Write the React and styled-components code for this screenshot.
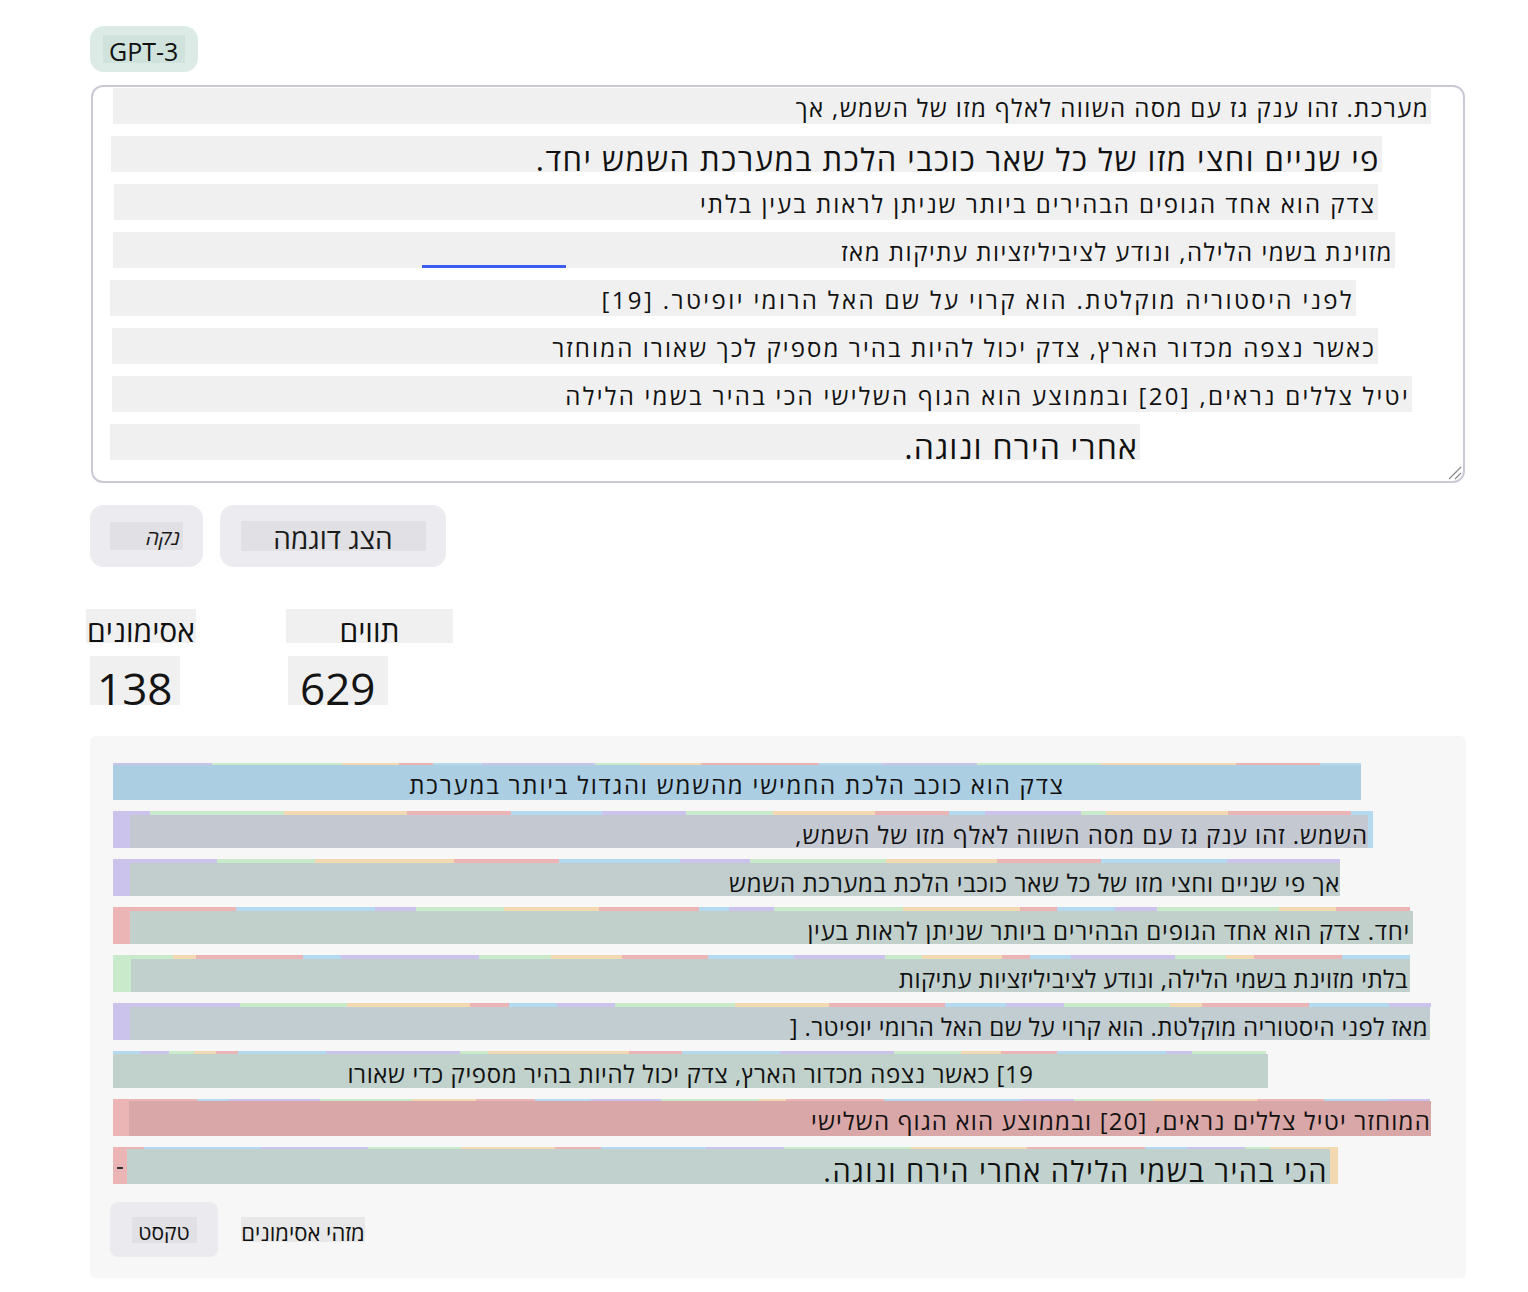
import styled, { createGlobalStyle } from "styled-components"

const GlobalStyle = createGlobalStyle`
  body {
    margin: 0;
    background: #ffffff;
    font-family: "Open Sans", "Noto Sans Hebrew", "DejaVu Sans", sans-serif;
    color: #111111;
  }
`;

const Page = styled.div`
  width: 1376px;
  padding: 26px 0 40px 90px;
`;

const ModelPill = styled.div`
  display: flex;
  align-items: center;
  width: 108px;
  height: 46px;
  box-sizing: border-box;
  padding-left: 13px;
  background: #dcebe5;
  border-radius: 14px;
`;

const PillLabel = styled.span`
  display: block;
  height: 28px;
  padding: 0 7px 0 6px;
  background: #cfe3dc;
  font-size: 25px;
  line-height: 33px;
`;

const Editor = styled.div`
  position: relative;
  margin: 13px 0 0 1px;
  width: 1374px;
  height: 398px;
  box-sizing: border-box;
  padding: 1px 0 0 20px;
  border: 2px solid #cacad6;
  border-radius: 12px;
  display: flex;
  flex-direction: column;
  gap: 12px;
`;

const EditorLine = styled.div`
  position: relative;
  width: ${p => p.$w}px;
  height: 36px;
  margin-left: ${p => p.$dx || 0}px;
  background: #f0f0f0;
  direction: rtl;
  text-align: right;
  font-size: ${p => p.$fs || 24}px;
  line-height: ${p => p.$lh || 40}px;
  letter-spacing: ${p => p.$ls || 0}px;
  white-space: nowrap;
  overflow: hidden;
  padding-right: 2px;
  box-sizing: border-box;
`;

const Caret = styled.div`
  position: absolute;
  left: 309px;
  bottom: 0;
  width: 144px;
  height: 3px;
  background: #3f5cf0;
`;

const ResizeGrip = styled.svg`
  position: absolute;
  right: 1px;
  bottom: 1px;
`;

const ButtonRow = styled.div`
  display: flex;
  gap: 17px;
  margin-top: 22px;
`;

const Button = styled.div`
  display: flex;
  align-items: center;
  justify-content: center;
  width: ${p => p.$w}px;
  height: 62px;
  background: #ebebf0;
  border-radius: 14px;
`;

const ButtonLabel = styled.span`
  display: block;
  width: ${p => p.$w}px;
  height: ${p => p.$h}px;
  background: #e0e0e5;
  direction: rtl;
  text-align: ${p => p.$align || "center"};
  font-size: ${p => p.$fs}px;
  line-height: ${p => p.$lh}px;
  font-style: ${p => (p.$italic ? "italic" : "normal")};
  padding-right: ${p => p.$pr || 0}px;
  box-sizing: border-box;
  overflow: hidden;
  white-space: nowrap;
  color: #1a1a1a;
`;

const Stats = styled.div`
  display: flex;
  margin-top: 42px;
  margin-left: -4px;
  gap: 90px;
`;

const Stat = styled.div`
  display: flex;
  flex-direction: column;
  gap: 13px;
`;

const StatLabel = styled.div`
  width: ${p => p.$w}px;
  height: 34px;
  background: #f0f0f0;
  direction: rtl;
  text-align: center;
  font-size: 30px;
  line-height: 44px;
  overflow: hidden;
  white-space: nowrap;
`;

const StatValue = styled.div`
  width: ${p => p.$w}px;
  height: 49px;
  margin-left: ${p => p.$dx || 0}px;
  background: #f0f0f0;
  font-size: 44px;
  line-height: 64px;
  padding-left: ${p => p.$pl}px;
  box-sizing: border-box;
  overflow: hidden;
  color: #141414;
`;

const Panel = styled.div`
  margin-top: 31px;
  background: #f7f7f7;
  border-radius: 6px;
  padding: 27px 0 21px 23px;
`;

const TokenRows = styled.div`
  display: flex;
  flex-direction: column;
  gap: 11px;
`;

const TokenRow = styled.div`
  display: grid;
  width: ${p => p.$w}px;
  height: 37px;
`;

const Stripes = styled.div`
  grid-area: 1 / 1;
  display: flex;
  height: 37px;
`;

const Seg = styled.div`
  height: ${p => (p.$full ? 37 : 4)}px;
  background: ${p => p.$c};
  flex-shrink: 0;
`;

const Overlay = styled.div`
  grid-area: 1 / 1;
  align-self: end;
  width: ${p => p.$w}px;
  height: ${p => p.$h || 33}px;
  margin-left: ${p => p.$dx}px;
  background: ${p => p.$bg};
  direction: rtl;
  text-align: ${p => p.$align};
  font-size: ${p => p.$fs || 24}px;
  line-height: ${p => p.$lh || 40}px;
  letter-spacing: ${p => p.$ls || 0}px;
  white-space: nowrap;
  overflow: hidden;
  padding-right: ${p => p.$pr || 0}px;
  box-sizing: border-box;
`;

const Dash = styled.span`
  grid-area: 1 / 1;
  align-self: center;
  justify-self: start;
  margin: 4px 0 0 4px;
  width: 6px;
  height: 2px;
  background: #333;
`;

const Footer = styled.div`
  display: flex;
  align-items: center;
  gap: 23px;
  margin: 18px 0 0 -3px;
`;

const Toggle = styled.div`
  display: flex;
  align-items: center;
  justify-content: center;
  width: 108px;
  height: 55px;
  background: #ebebef;
  border-radius: 8px;
`;

const ToggleLabel = styled.span`
  display: block;
  width: 65px;
  height: 26px;
  background: #e0e0e5;
  font-size: 21px;
  line-height: 30px;
  text-align: center;
  direction: rtl;
  overflow: hidden;
`;

const FooterLabel = styled.span`
  display: block;
  width: 124px;
  height: 25px;
  background: #e8e8e8;
  font-size: 22px;
  line-height: 30px;
  direction: rtl;
  text-align: center;
  overflow: hidden;
  white-space: nowrap;
`;

const editorLines = [
  { w: 1318, ls: 1.4, text: "מערכת. זהו ענק גז עם מסה השווה לאלף מזו של השמש, אך" },
  { w: 1271, dx: -2, fs: 31, lh: 46, ls: 1.5, text: "פי שניים וחצי מזו של כל שאר כוכבי הלכת במערכת השמש יחד." },
  { w: 1264, dx: 1, ls: 2, text: "צדק הוא אחד הגופים הבהירים ביותר שניתן לראות בעין בלתי" },
  { w: 1282, ls: 1.5, caret: true, text: "מזוינת בשמי הלילה, ונודע לציביליזציות עתיקות מאז" },
  { w: 1246, dx: -3, ls: 2.4, text: "לפני היסטוריה מוקלטת. הוא קרוי על שם האל הרומי יופיטר. [19]" },
  { w: 1266, dx: -1, ls: 2.1, text: "כאשר נצפה מכדור הארץ, צדק יכול להיות בהיר מספיק לכך שאורו המוחזר" },
  { w: 1300, dx: -1, ls: 2.3, text: "יטיל צללים נראים, [20] ובממוצע הוא הגוף השלישי הכי בהיר בשמי הלילה" },
  { w: 1030, dx: -3, fs: 32, lh: 46, ls: 1.2, text: "אחרי הירח ונוגה." },
];

const tokenColors = ["#cbc3eb", "#c9ebcb", "#f2d9b1", "#ecb5b5", "#b5daef"];

// rows of the token view: stripe width, first colour, overlay box and text
const tokenRows = [
  { w: 1248, start: 0, seed: 11, dx: 0, ow: 1248, bg: "#abcee2", align: "center", h: 35, ls: 1.8,
    text: "צדק הוא כוכב הלכת החמישי מהשמש והגדול ביותר במערכת" },
  { w: 1260, start: 0, seed: 23, dx: 17, ow: 1238, bg: "#c4c8d1", align: "right", ls: 1, tail: true,
    text: "השמש. זהו ענק גז עם מסה השווה לאלף מזו של השמש," },
  { w: 1227, start: 0, seed: 37, dx: 17, ow: 1210, bg: "#c1cecd", align: "right", ls: 0.65,
    text: "אך פי שניים וחצי מזו של כל שאר כוכבי הלכת במערכת השמש" },
  { w: 1297, start: 3, seed: 41, dx: 17, ow: 1283, bg: "#c1d0cb", align: "right", pr: 3, ls: 0.75,
    text: "יחד. צדק הוא אחד הגופים הבהירים ביותר שניתן לראות בעין" },
  { w: 1297, start: 1, seed: 53, dx: 18, ow: 1279, bg: "#c1cfcd", align: "right", pr: 2, ls: 0.4,
    text: "בלתי מזוינת בשמי הלילה, ונודע לציביליזציות עתיקות" },
  { w: 1318, start: 0, seed: 67, dx: 17, ow: 1300, bg: "#c2cdd2", align: "right", pr: 2, ls: 0.35,
    text: "מאז לפני היסטוריה מוקלטת. הוא קרוי על שם האל הרומי יופיטר. [" },
  { w: 1153, start: 4, seed: 71, dx: 0, ow: 1155, bg: "#c1d1cb", align: "center", h: 34, ls: 0.6,
    text: "19] כאשר נצפה מכדור הארץ, צדק יכול להיות בהיר מספיק כדי שאורו" },
  { w: 1317, start: 3, seed: 83, dx: 16, ow: 1302, bg: "#d9a7a7", align: "right", h: 35, ls: 1.2,
    text: "המוחזר יטיל צללים נראים, [20] ובממוצע הוא הגוף השלישי" },
  { w: 1225, start: 3, seed: 97, dx: 14, ow: 1203, bg: "#c1d1cd", align: "right", pr: 2, fs: 29, lh: 44, h: 35, ls: 1.5, dash: true, tail: true,
    text: "הכי בהיר בשמי הלילה אחרי הירח ונוגה." },
];

function makeSegments(total, start, seed) {
  const segs = [];
  let r = seed;
  let acc = 0;
  let i = start;
  while (acc < total) {
    r = (r * 9301 + 49297) % 233280;
    const w = Math.min(total - acc, 22 + Math.floor((r / 233280) * 120));
    segs.push({ w, c: tokenColors[i % 5] });
    acc += w;
    i++;
  }
  return segs;
}

const App = () => {
  return (
    <Page>
      <GlobalStyle />
      <ModelPill>
        <PillLabel>GPT-3</PillLabel>
      </ModelPill>

      <Editor>
        {editorLines.map((l, i) => (
          <EditorLine key={i} $w={l.w} $dx={l.dx} $fs={l.fs} $lh={l.lh} $ls={l.ls}>
            {l.text}
            {l.caret && <Caret />}
          </EditorLine>
        ))}
        <ResizeGrip width="16" height="16" viewBox="0 0 16 16">
          <path d="M15 3 L3 15 M15 9 L9 15" stroke="#888" strokeWidth="1.2" fill="none" />
        </ResizeGrip>
      </Editor>

      <ButtonRow>
        <Button $w={113}>
          <ButtonLabel $w={73} $h={28} $fs={21} $lh={30} $align="right" $pr={3} $italic>נקה</ButtonLabel>
        </Button>
        <Button $w={226}>
          <ButtonLabel $w={185} $h={30} $fs={28} $lh={34}>הצג דוגמה</ButtonLabel>
        </Button>
      </ButtonRow>

      <Stats>
        <Stat>
          <StatLabel $w={110}>אסימונים</StatLabel>
          <StatValue $w={90} $dx={4} $pl={7}>138</StatValue>
        </Stat>
        <Stat>
          <StatLabel $w={167}>תווים</StatLabel>
          <StatValue $w={100} $dx={2} $pl={12}>629</StatValue>
        </Stat>
      </Stats>

      <Panel>
        <TokenRows>
          {tokenRows.map((row, i) => {
            const segs = makeSegments(row.w, row.start, row.seed);
            return (
              <TokenRow key={i} $w={row.w}>
                <Stripes>
                  {segs.map((s, j) => (
                    <Seg
                      key={j}
                      $c={s.c}
                      $full={j === 0 || (row.tail && j === segs.length - 1)}
                      style={{ width: s.w }}
                    />
                  ))}
                </Stripes>
                {row.dash && <Dash />}
                <Overlay
                  $w={row.ow}
                  $dx={row.dx}
                  $bg={row.bg}
                  $align={row.align}
                  $pr={row.pr}
                  $fs={row.fs}
                  $lh={row.lh}
                  $h={row.h}
                  $ls={row.ls}
                >
                  {row.text}
                </Overlay>
              </TokenRow>
            );
          })}
        </TokenRows>

        <Footer>
          <Toggle>
            <ToggleLabel>טקסט</ToggleLabel>
          </Toggle>
          <FooterLabel>מזהי אסימונים</FooterLabel>
        </Footer>
      </Panel>
    </Page>
  );
};

export default App
